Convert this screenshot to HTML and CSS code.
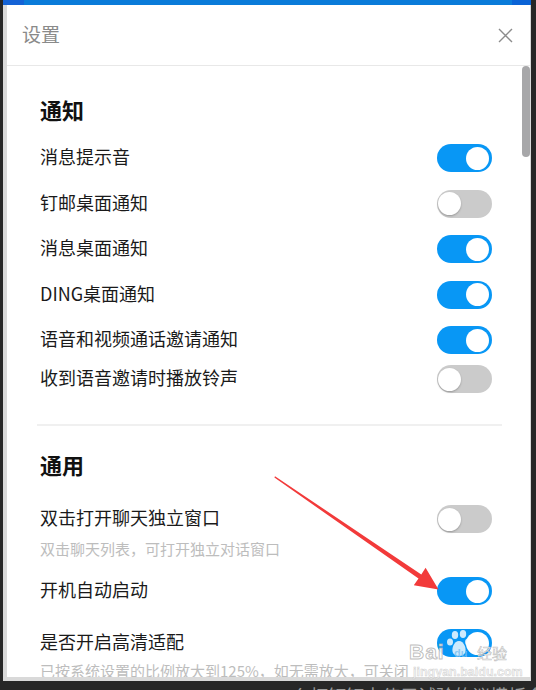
FILE: index.html
```html
<!DOCTYPE html>
<html lang="zh-CN">
<head>
<meta charset="utf-8">
<title>设置</title>
<link rel="stylesheet" href="styles.css">
</head>
<body>
<div class="frame">
  <div class="topbar"></div>
  <div class="window">
    <header class="head">
      <span class="head-title">设置</span>
      <svg class="close" width="15" height="15" viewBox="0 0 15 15"><path d="M1 1 L14 14 M14 1 L1 14" stroke="#8c8c8c" stroke-width="1.4" fill="none"/></svg>
    </header>
    <div class="body">
      <div class="content">
        <section class="sec">
          <h2 class="sec-title">通知</h2>
          <div class="row"><span class="label">消息提示音</span><span class="sw on"><span class="knob"></span></span></div>
          <div class="row"><span class="label">钉邮桌面通知</span><span class="sw"><span class="knob"></span></span></div>
          <div class="row"><span class="label">消息桌面通知</span><span class="sw on"><span class="knob"></span></span></div>
          <div class="row"><span class="label">DING桌面通知</span><span class="sw on"><span class="knob"></span></span></div>
          <div class="row"><span class="label">语音和视频通话邀请通知</span><span class="sw on"><span class="knob"></span></span></div>
          <div class="row row-tight"><span class="label">收到语音邀请时播放铃声</span><span class="sw"><span class="knob"></span></span></div>
        </section>
        <div class="divider"></div>
        <section class="sec">
          <h2 class="sec-title">通用</h2>
          <div class="row"><span class="label">双击打开聊天独立窗口</span><span class="sw"><span class="knob"></span></span></div>
          <p class="desc">双击聊天列表，可打开独立对话窗口</p>
          <div class="row row-a"><span class="label">开机自动启动</span><span class="sw on"><span class="knob"></span></span></div>
          <div class="row row-b"><span class="label">是否开启高清适配</span><span class="sw on"><span class="knob"></span></span></div>
          <p class="desc desc-b">已按系统设置的比例放大到125%，如无需放大，可关闭</p>
        </section>
      </div>
      <div class="track"><div class="thumb"></div></div>
    </div>
  </div>
</div>
<div class="under">么打钉钉电使用试验的议模板会显示</div>

<svg class="arrow" width="536" height="690" viewBox="0 0 536 690">
  <polygon points="275,476.3 421.3,574.4 425.6,567.8 438.5,589.5 413.8,585.2 418.5,578.6 274.4,477.6" fill="#f23a3a"/>
</svg>

<div class="watermark">
  <svg class="paw" width="30" height="28" viewBox="0 0 30 28">
    <ellipse cx="9" cy="5" rx="3.2" ry="4" fill="rgba(255,255,255,0.8)"/>
    <ellipse cx="17" cy="4" rx="3.2" ry="4" fill="rgba(255,255,255,0.8)"/>
    <ellipse cx="4" cy="12" rx="3" ry="3.6" fill="rgba(255,255,255,0.8)"/>
    <ellipse cx="22" cy="12" rx="3" ry="3.6" fill="rgba(255,255,255,0.8)"/>
    <path d="M13 11 C8 11 5 19 7 23 C9 27 17 27 19 23 C21 19 18 11 13 11 Z" fill="rgba(255,255,255,0.8)"/>
  </svg>
  <span class="wm-bai">Bai</span>
  <span class="wm-du">du</span>
  <span class="wm-jy">经验</span>
  <span class="wm-url">jingyan.baidu.com</span>
</div>
</body>
</html>
```

FILE: styles.css
```css
* { box-sizing: border-box; }

html, body {
  margin: 0;
  padding: 0;
}

body {
  width: 536px;
  height: 690px;
  overflow: hidden;
  background: #272727;
  font-family: "Noto Sans CJK SC", "Noto Sans", sans-serif;
  position: relative;
}

.frame {
  margin-left: 3px;
  width: 528px;
  border-left: 4px solid #d9d9d9;
  border-right: 1px solid #d9d9d9;
  border-bottom: 4px solid #d9d9d9;
}

.topbar {
  height: 5px;
  margin-left: -4px;
  margin-right: -1px;
  background: linear-gradient(to right, #1463d6 0, #1463d6 21px, #0a7bd9 21px, #0a7bd9 calc(100% - 19px), #0a63d6 calc(100% - 19px));
}

.window {
  background: #fff;
  height: 672px;
  display: flex;
  flex-direction: column;
}

.head {
  height: 61px;
  flex: none;
  border-bottom: 1px solid #e8e8e8;
  display: flex;
  align-items: center;
  justify-content: space-between;
  padding: 0 17px 0 15px;
}

.head-title {
  font-size: 19px;
  color: #8a8a8a;
  line-height: 24px;
  padding-bottom: 2px;
}

.close {
  display: block;
  margin-top: 1px;
}

.body {
  flex: 1;
  display: flex;
  overflow: hidden;
}

.content {
  flex: 1;
  padding: 28px 30px 0 33px;
  overflow: hidden;
}

.track {
  width: 8px;
  flex: none;
}

.thumb {
  width: 8px;
  height: 91px;
  border-radius: 4px;
  background: #a7a7a9;
}

.sec-title {
  margin: 0;
  font-size: 22px;
  line-height: 30px;
  font-weight: bold;
  color: #111;
}

.row {
  height: 28px;
  display: flex;
  align-items: center;
  justify-content: space-between;
  margin-top: 17.5px;
}

.sec-title + .row { margin-top: 20px; }

.row-tight { margin-top: 11px; }

.label {
  font-size: 18px;
  line-height: 24px;
  padding-bottom: 4px;
  color: #1a1a1a;
  white-space: nowrap;
}

.sw {
  width: 55px;
  height: 28px;
  border-radius: 14px;
  background: #cbcbcb;
  display: flex;
  align-items: center;
  padding: 0 3px 0 1px;
  flex: none;
}

.sw.on {
  background: #0897f5;
  justify-content: flex-end;
}

.knob {
  width: 23px;
  height: 23px;
  border-radius: 50%;
  background: #fff;
  box-shadow: 0 1px 2px rgba(0, 0, 0, 0.25);
}

.sw.on .knob { box-shadow: none; }

.divider {
  height: 2px;
  background: #f0f0f0;
  margin: 31px -10px 23px -3px;
}

.sec + .divider + .sec .sec-title + .row { margin-top: 26px; }

.desc {
  margin: 6px 0 0;
  font-size: 15px;
  line-height: 20px;
  padding-bottom: 2px;
  color: #bdbdbd;
  white-space: nowrap;
}

.row-a { margin-top: 16px; }
.row-b { margin-top: 24px; }
.desc-b { margin-top: 4px; }

.under {
  margin-left: 292px;
  height: 9px;
  overflow: hidden;
  padding-top: 3px;
  font-size: 18px;
  line-height: 22px;
  color: #9a9a9a;
  white-space: nowrap;
}

.arrow {
  position: absolute;
  left: 0;
  top: 0;
  pointer-events: none;
}

.watermark {
  position: absolute;
  left: 405px;
  top: 628px;
  width: 125px;
  height: 52px;
  pointer-events: none;
}

.paw {
  position: absolute;
  left: 41px;
  top: 2px;
}

.wm-bai, .wm-du, .wm-jy, .wm-url {
  position: absolute;
  font-family: "Liberation Sans", Arial, sans-serif;
  color: rgba(255, 255, 255, 0.9);
  -webkit-text-stroke: 1px rgba(170, 170, 170, 0.75);
  white-space: nowrap;
}

.wm-bai {
  left: 4px;
  top: 14px;
  font-size: 21px;
  font-weight: bold;
  line-height: 20px;
  letter-spacing: 1px;
}

.wm-du {
  left: 49px;
  top: 19px;
  font-size: 11px;
  font-weight: bold;
  line-height: 12px;
  color: rgba(120, 190, 240, 0.8);
  -webkit-text-stroke: 0;
}

.wm-jy {
  left: 72px;
  top: 17px;
  font-family: "Noto Sans CJK SC", sans-serif;
  font-size: 15px;
  line-height: 16px;
  -webkit-text-stroke: 0.6px rgba(170, 170, 170, 0.75);
}

.wm-url {
  left: 8px;
  top: 38px;
  font-size: 12.5px;
  line-height: 13px;
  font-weight: bold;
  -webkit-text-stroke: 0.5px rgba(190, 190, 190, 0.7);
  color: rgba(240, 240, 240, 0.8);
}
```
